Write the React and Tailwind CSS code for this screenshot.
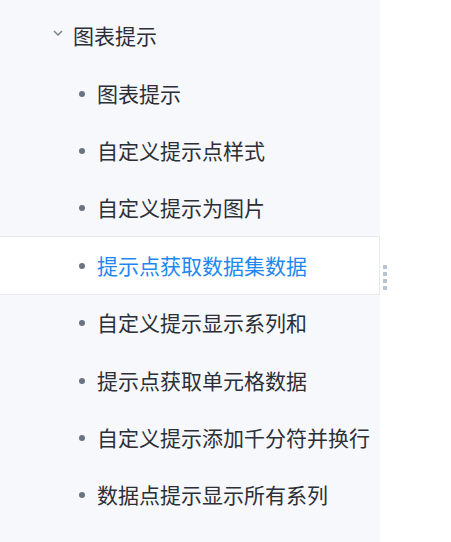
const items = [
  "图表提示",
  "自定义提示点样式",
  "自定义提示为图片",
  "提示点获取数据集数据",
  "自定义提示显示系列和",
  "提示点获取单元格数据",
  "自定义提示添加千分符并换行",
  "数据点提示显示所有系列",
];

const ACTIVE = 3;

function Item({ label, active }) {
  return (
    <div
      className={`flex items-center pl-[79px] ${
        active
          ? "h-[59.4px] -my-[1px] bg-white border-y border-r border-[#e8e9ee] text-[#1e88f0]"
          : "h-[57.4px] text-[#2b2f36]"
      }`}
    >
      <span className="w-[6px] h-[6px] rounded-full bg-[#6b7280] mr-[12px] mt-[1px]" />
      <span>{label}</span>
    </div>
  );
}

export default function App() {
  return (
    <div
      className="flex h-[542px] w-[451px] bg-white overflow-hidden text-[21px] leading-none"
      style={{ fontFamily: '"Microsoft YaHei", "Noto Sans CJK SC", sans-serif' }}
    >
      <div className="w-[380px] h-full bg-[#f7f8fc] pt-[7px] shrink-0">
        <div className="flex items-center h-[57.4px] pl-[53px] text-[#2b2f36]">
          <svg width="10" height="6" viewBox="0 0 10 6" className="mr-[10px] -mt-[6px]">
            <path d="M1 1 L5 5 L9 1" fill="none" stroke="#7a808c" strokeWidth="1.5" />
          </svg>
          <span>图表提示</span>
        </div>
        {items.map((label, i) => (
          <Item key={i} label={label} active={i === ACTIVE} />
        ))}
      </div>
      <div className="flex-1 relative">
        <div className="flex flex-col gap-[3px] mt-[265px] ml-[3px]">
          <span className="w-[4px] h-[4px] bg-[#b9c2ce]" />
          <span className="w-[4px] h-[4px] bg-[#b9c2ce]" />
          <span className="w-[4px] h-[4px] bg-[#b9c2ce]" />
          <span className="w-[4px] h-[4px] bg-[#b9c2ce]" />
        </div>
      </div>
    </div>
  );
}
